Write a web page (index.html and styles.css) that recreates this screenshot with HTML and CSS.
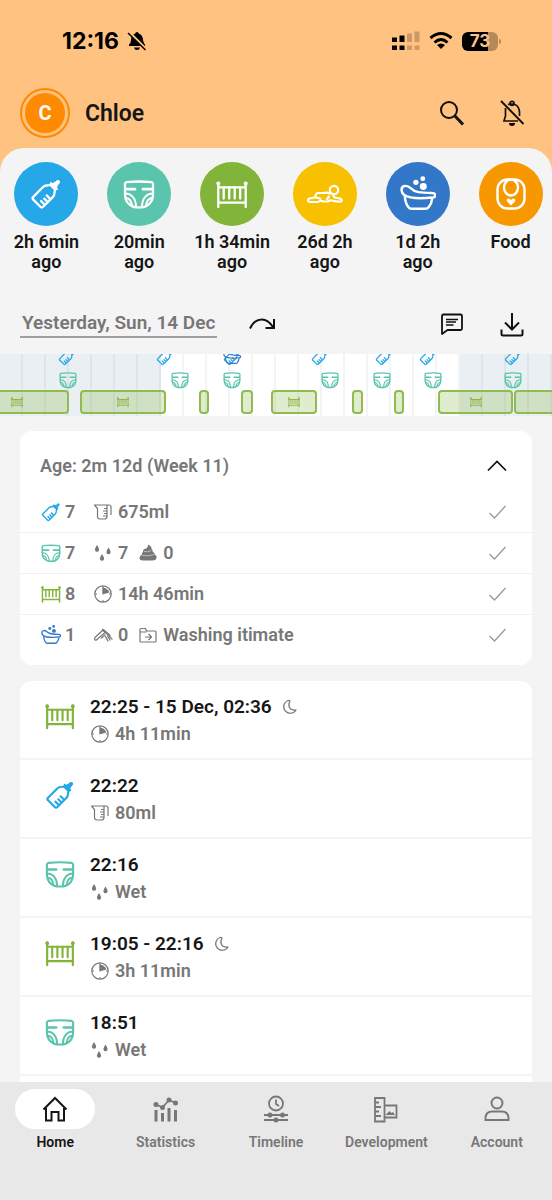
FILE: index.html
```html
<!DOCTYPE html>
<html lang="en">
<head>
<meta charset="utf-8">
<meta name="viewport" content="width=device-width, initial-scale=1">
<title>Chloe</title>
<link rel="stylesheet" href="styles.css">
</head>
<body>
<svg class="sprite" aria-hidden="true">
  <symbol id="bottle" viewBox="0 0 32 32">
    <g transform="rotate(45 16 16)" fill="none" stroke="currentColor" stroke-width="2.3" stroke-linejoin="round" stroke-linecap="round">
      <path d="M9 13.500Q9 11 10.500 9.500Q12 8 12.500 6.500H19.500Q20 8 21.500 9.500Q23 11 23 13.500V27Q23 29 21 29H11Q9 29 9 27Z"/>
      <path d="M22 24.500H17.500M22 20.500H18M22 16.500H17.500"/>
      <path fill="currentColor" stroke-width="1.500" d="M11.500 4.500H20.500L19.500 6.500H12.500ZM13.500 4Q14.800 2 14.800-1.500Q16-3 17.200-1.500Q17.200 2 18.500 4Z"/>
    </g>
  </symbol>
  <symbol id="diaper" viewBox="0 0 32 32">
    <g fill="none" stroke="currentColor" stroke-width="2.300" stroke-linecap="round" stroke-linejoin="round">
      <path d="M2 6Q2 4.500 3.500 4.200Q16 2.800 28.500 4.200Q30 4.500 30 6V16Q30 23 25.500 26.500Q22 29.300 19 29.300H13Q10 29.300 6.500 26.500Q2 23 2 16Z"/>
      <path d="M3 11.200H12M20 11.200H29" stroke-width="2.800"/>
      <path d="M2 15.500C9 15.500 13 21 13 29M30 15.500C23 15.500 19 21 19 29M3 20C6.500 20.500 8.500 23 9 27.500M29 20C25.500 20.500 23.500 23 23 27.500" stroke-width="2"/>
    </g>
  </symbol>
  <symbol id="crib" viewBox="0 0 32 32">
    <g fill="none" stroke="currentColor" stroke-width="2.300" stroke-linecap="round">
      <path d="M2.300 5V29M29.700 5V29M2.500 9.300H29.500M2.500 24.700H29.500"/>
      <path d="M7.700 9.500V20.500M13.200 9.500V20.500M18.700 9.500V20.500M24.200 9.500V20.500"/>
    </g>
    <circle cx="2.300" cy="5.500" r="2" fill="currentColor"/><circle cx="29.700" cy="5.500" r="2" fill="currentColor"/>
  </symbol>
  <symbol id="tummy" viewBox="0 0 36 32">
    <g fill="none" stroke="currentColor" stroke-width="2.200" stroke-linejoin="round" stroke-linecap="round">
      <circle cx="27" cy="12" r="4.200"/>
      <path d="M23 15.500Q20 14 17 15H11Q9 15 8.500 18L7.500 19.500L2.500 20.500Q.5 21.500 1 23Q1.500 24 4 24H11L14 22.500L16 23.500H21Q23 22 25 22.500Q30 24 34 23.500Q36 22 33 20.500L27.500 19.500L26 17M9 19.500L13 20.500M22 18.500L20 21"/>
    </g>
  </symbol>
  <symbol id="bath" viewBox="-1 -1 34 34">
    <g fill="none" stroke="currentColor" stroke-width="2.300" stroke-linejoin="round">
      <path d="M.5 12C.5 8 5.500 7 9 10.500C13 14.500 18 15 29 15C33.500 15 33 19 30 19.300C20 20.300 8 20.500 3 17C1 15.500.5 14 .5 12Z"/>
      <path d="M3.500 18Q4 25 7 28.500Q8 30 10 30H23Q25 30 26 28.500Q29 25 29.500 20"/>
    </g>
    <g fill="currentColor"><circle cx="14" cy="5" r="2.500"/><circle cx="20.500" cy="1.500" r="2.300"/><circle cx="21" cy="9" r="3.300"/></g>
  </symbol>
  <symbol id="bib" viewBox="0 0 32 34">
    <g fill="none" stroke="currentColor" stroke-width="2.400">
      <rect x="2.500" y="2.500" width="27" height="29" rx="10"/><ellipse cx="16" cy="10.500" rx="7" ry="8"/>
    </g>
    <path fill="currentColor" d="M16 28.500L12 24.500Q11 22 13.500 21.500Q15 21.500 16 23Q17 21.500 18.500 21.500Q21 22 20 24.500Z"/>
  </symbol>
  <symbol id="jug" viewBox="0 0 20 20">
    <g fill="none" stroke="currentColor" stroke-width="1.200" stroke-linejoin="round">
      <path d="M1.500 3H14V14.500Q14 17 11.500 17H7Q4.500 17 4.500 14.500V6.500Z"/><path d="M14 3H16Q18 3 18 5V13M11 6.500H14M10 9H14M11 11.500H14M10 14H14"/>
    </g>
  </symbol>
  <symbol id="drops" viewBox="0 0 20 20">
    <path fill="currentColor" d="M4 2Q6.500 6 6 7.200Q5.500 8.700 4 8.700T2 7.200Q1.500 6 4 2ZM15.500 4.500Q18 8.500 17.500 9.700Q17 11.200 15.500 11.200T13.500 9.700Q13 8.500 15.500 4.500ZM9 11Q11.500 15 11 16.200Q10.500 17.700 9 17.700T7 16.200Q6.500 15 9 11Z"/>
  </symbol>
  <symbol id="poop" viewBox="0 0 20 20">
    <path fill="currentColor" d="M10 1.500Q14 3.500 13.500 6Q15.500 7 14.500 9Q17 9.500 16.500 11.500Q19 12.500 18.500 15Q18 17.500 14 17.500H5Q1.500 17.500 1.500 15Q1.500 12.500 4 11.500Q3.500 9.500 5 9Q4.500 7 6.500 6Q10 5.500 10 1.500Z"/>
    <path fill="none" stroke="#fff" stroke-width=".5" d="M6 8.500Q10 9.500 13 7.500M4 12.500Q10 13.500 16 11.500"/>
  </symbol>
  <symbol id="clock" viewBox="0 0 20 20">
    <circle cx="10" cy="10" r="8.200" fill="none" stroke="currentColor" stroke-width="1.200"/>
    <path fill="currentColor" d="M9.300 10.500V3.500Q14 3.500 16.500 8.500Z"/>
    <path stroke="currentColor" stroke-width="1" d="M2 10H4M16 10H18M10 16V18M10 2V4"/>
  </symbol>
  <symbol id="brush" viewBox="0 0 20 20">
    <g fill="none" stroke="currentColor" stroke-width="1.200" stroke-linecap="round">
      <path d="M9.500 5.500L2 12.500Q1 14 2 15Q3 15.500 4 14.500L11.500 8"/>
      <path d="M10 4.800L16.500 10.500" stroke-width="2.200"/>
      <path d="M12 10L8.500 13M12.500 11.500L15 16M14.500 11L17 15M16.500 11.500L19 14" stroke-width="1.300"/>
    </g>
  </symbol>
  <symbol id="folder" viewBox="0 0 20 20">
    <g fill="none" stroke="currentColor" stroke-width="1.200" stroke-linejoin="round"><path d="M2 16V4.500Q2 3.500 3 3.500H7.500L8.500 6H17Q18 6 18 7V16Q18 17 17 17H3Q2 17 2 16ZM2 7H8.500"/><path d="M7 12H13M10.500 9L13.500 12L10.500 15"/></g>
  </symbol>
  <symbol id="moon" viewBox="0 0 16 16">
    <path fill="none" stroke="currentColor" stroke-width="1.200" stroke-linejoin="round" d="M6 1.500A6.600 6.600 0 1 0 14 11Q9 11.500 7.500 8.500Q6 5.500 8 2Q7 1.300 6 1.500Z"/>
  </symbol>
  <symbol id="check" viewBox="0 0 20 20"><path d="M2.500 11L7.500 16L18.500 4" fill="none" stroke="currentColor" stroke-width="1.300"/></symbol>
</svg>

<div class="app">
  <header class="top">
    <div class="status">
      <span class="time">12:16
        <svg class="i20" viewBox="0 0 20 20"><path d="M10 1Q11.500 1 11.700 2.500Q16 4 16 9Q16.500 12 18 13.500V15H2V13.500Q4 12 4 9Q4 4 8.300 2.500Q8.500 1 10 1Z M7 16.500H13Q12.500 19 10 19T7 16.500Z" fill="#000"/><path d="M2.500 1.500L19.500 18.500" stroke="#ffc280" stroke-width="2.500"/><path d="M1 2L18.500 19" stroke="#000" stroke-width="1.500"/></svg>
      </span>
      <span class="signals">
        <svg class="cell" viewBox="0 0 28 20"><path d="M0 6.500h5v4.500h-5zM7.500 4.500h5v6.500h-5zM0 14.500h5v4.500h-5zM7.500 14.500h5v4.500h-5z" fill="#000"/><path d="M15 2.500h5v8.500h-5zM22.500.5h5v10.500h-5zM15 14.500h5v4.500h-5zM22.500 14.500h5v4.500h-5z" fill="#c99a66"/></svg>
        <svg class="wifi" viewBox="0 0 24 20"><g fill="none" stroke="#000" stroke-width="3"><path d="M1.500 7Q12-2 22.500 7M5.500 11.500Q12 5.500 18.500 11.500"/></g><path d="M8 14Q12 11 16 14L12 18Z"/></svg>
        <span class="battery"><span class="level">73</span></span>
      </span>
    </div>
    <div class="appbar">
      <button class="avatar" aria-label="Profile of Chloe"><span class="initial">C</span></button>
      <h1 class="name">Chloe</h1>
      <button class="icon-btn" aria-label="Search"><svg class="i28" viewBox="0 0 28 28"><circle cx="11" cy="11" r="8" fill="none" stroke="#111" stroke-width="2"/><path d="M16.500 16.500L25 25.500" stroke="#111" stroke-width="3"/></svg></button>
      <button class="icon-btn" aria-label="Notifications off"><svg class="i28" viewBox="0 0 28 28"><g fill="none" stroke="#111" stroke-width="1.700"><path d="M10 5.500Q20.500 3 21.500 13V17M7.500 9V17L6 22H20"/><circle cx="14" cy="4.300" r="2"/><path d="M3 2L25.500 25" stroke-width="1.900"/></g><path d="M11 24H17Q17 27 14 27T11 24Z"/></svg></button>
    </div>
  </header>

  <main class="panel">
    <nav class="activities" aria-label="Activities">
      <button class="activity"><span class="disc blue"><svg class="i32"><use href="#bottle"/></svg></span>2h 6min<br>ago</button>
      <button class="activity"><span class="disc teal"><svg class="i32"><use href="#diaper"/></svg></span>20min<br>ago</button>
      <button class="activity"><span class="disc green"><svg class="i32"><use href="#crib"/></svg></span>1h 34min<br>ago</button>
      <button class="activity"><span class="disc yellow"><svg class="i36"><use href="#tummy"/></svg></span>26d 2h<br>ago</button>
      <button class="activity"><span class="disc navy"><svg class="i36"><use href="#bath"/></svg></span>1d 2h<br>ago</button>
      <button class="activity"><span class="disc orange"><svg class="i34"><use href="#bib"/></svg></span>Food</button>
    </nav>

    <div class="daybar">
      <button class="date">Yesterday, Sun, 14 Dec</button>
      <button class="icon-btn" aria-label="Next day"><svg class="i28" viewBox="0 0 28 28"><path d="M2 18.500Q6 9.500 14 9.500Q20 9.500 25 17M26 9V18H17.500" fill="none" stroke="#111" stroke-width="2"/></svg></button>
      <button class="icon-btn push" aria-label="Notes"><svg class="i28" viewBox="0 0 28 28"><g fill="none" stroke="#111" stroke-width="1.800" stroke-linejoin="round"><path d="M4 24V6Q4 4.500 5.500 4.500H22.500Q24 4.500 24 6V18.500Q24 20 22.500 20H9.500Z"/><path d="M8 9.500H20M8 12H18M8 15H15.500" stroke-width="1.500"/></g></svg></button>
      <button class="icon-btn" aria-label="Download"><svg class="i28" viewBox="0 0 28 28"><path d="M14 3V19M7 12.500L14 19.500L21 12.500M3.500 19.500V24Q3.500 25.500 5 25.500H23Q24.500 25.500 24.500 24V19.500" fill="none" stroke="#111" stroke-width="2"/></svg></button>
    </div>

    <div class="timeline">
      <span class="night" style="left:0%;width:29.200%"></span>
      <span class="night" style="left:83.300%;width:16.700%"></span>
      <div class="hours"><i></i><i></i><i></i><i></i><i></i><i></i><i></i><i></i><i></i><i></i><i></i><i></i><i></i><i></i><i></i><i></i><i></i><i></i><i></i><i></i><i></i><i></i><i></i><i></i></div>
      <svg class="mark feed" style="left:12.200%"><use href="#bottle"/></svg>
      <svg class="mark feed" style="left:29.900%"><use href="#bottle"/></svg>
      <svg class="mark feed" style="left:42%"><use href="#bottle"/></svg>
      <svg class="mark wash" style="left:42%"><use href="#bath"/></svg>
      <svg class="mark feed" style="left:58%"><use href="#bottle"/></svg>
      <svg class="mark feed" style="left:69.600%"><use href="#bottle"/></svg>
      <svg class="mark feed" style="left:77.500%"><use href="#bottle"/></svg>
      <svg class="mark feed" style="left:93%"><use href="#bottle"/></svg>
      <svg class="mark change" style="left:12.300%"><use href="#diaper"/></svg>
      <svg class="mark change" style="left:32.600%"><use href="#diaper"/></svg>
      <svg class="mark change" style="left:42%"><use href="#diaper"/></svg>
      <svg class="mark change" style="left:59.800%"><use href="#diaper"/></svg>
      <svg class="mark change" style="left:69.200%"><use href="#diaper"/></svg>
      <svg class="mark change" style="left:78.500%"><use href="#diaper"/></svg>
      <svg class="mark change" style="left:92.900%"><use href="#diaper"/></svg>
      <span class="sleep" style="left:-6.500%;width:19%"><svg class="i12"><use href="#crib"/></svg></span>
      <span class="sleep" style="left:14.500%;width:15.600%"><svg class="i12"><use href="#crib"/></svg></span>
      <span class="sleep" style="left:36%;width:1.900%"></span>
      <span class="sleep" style="left:43.700%;width:2.100%"></span>
      <span class="sleep" style="left:49.100%;width:8.300%"><svg class="i12"><use href="#crib"/></svg></span>
      <span class="sleep" style="left:63.800%;width:2%"></span>
      <span class="sleep" style="left:71.400%;width:1.800%"></span>
      <span class="sleep" style="left:79.400%;width:13.600%"><svg class="i12"><use href="#crib"/></svg></span>
      <span class="sleep" style="left:93.200%;width:20%"></span>
    </div>

    <section class="card summary">
      <button class="age">Age: 2m 12d (Week 11)<svg class="i20" viewBox="0 0 20 20"><path d="M1 14.500L10 5.500L19 14.500" fill="none" stroke="#111" stroke-width="1.700"/></svg></button>
      <ul class="rows">
        <li><span class="count"><svg class="i20 c-blue"><use href="#bottle"/></svg>7</span><svg class="i20"><use href="#jug"/></svg>675ml<svg class="i20 tick"><use href="#check"/></svg></li>
        <li><span class="count"><svg class="i20 c-teal"><use href="#diaper"/></svg>7</span><svg class="i20"><use href="#drops"/></svg>7 <svg class="i20 second"><use href="#poop"/></svg>0<svg class="i20 tick"><use href="#check"/></svg></li>
        <li><span class="count"><svg class="i20 c-green"><use href="#crib"/></svg>8</span><svg class="i20"><use href="#clock"/></svg>14h 46min<svg class="i20 tick"><use href="#check"/></svg></li>
        <li><span class="count"><svg class="i20 c-navy"><use href="#bath"/></svg>1</span><svg class="i20"><use href="#brush"/></svg>0 <svg class="i20 second"><use href="#folder"/></svg>Washing itimate<svg class="i20 tick"><use href="#check"/></svg></li>
      </ul>
    </section>

    <section class="card log">
      <a class="entry" href="#"><svg class="i30 c-green"><use href="#crib"/></svg><span class="what"><span class="when">22:25 - 15 Dec, 02:36<svg class="i16"><use href="#moon"/></svg></span><span class="detail"><svg class="i20"><use href="#clock"/></svg>4h 11min</span></span></a>
      <a class="entry" href="#"><svg class="i30 c-blue"><use href="#bottle"/></svg><span class="what"><span class="when">22:22</span><span class="detail"><svg class="i20"><use href="#jug"/></svg>80ml</span></span></a>
      <a class="entry" href="#"><svg class="i30 c-teal"><use href="#diaper"/></svg><span class="what"><span class="when">22:16</span><span class="detail"><svg class="i20"><use href="#drops"/></svg>Wet</span></span></a>
      <a class="entry" href="#"><svg class="i30 c-green"><use href="#crib"/></svg><span class="what"><span class="when">19:05 - 22:16<svg class="i16"><use href="#moon"/></svg></span><span class="detail"><svg class="i20"><use href="#clock"/></svg>3h 11min</span></span></a>
      <a class="entry" href="#"><svg class="i30 c-teal"><use href="#diaper"/></svg><span class="what"><span class="when">18:51</span><span class="detail"><svg class="i20"><use href="#drops"/></svg>Wet</span></span></a>
      <div class="more"></div>
    </section>
  </main>

  <nav class="tabs" aria-label="Main">
    <a class="tab current" href="#"><span class="pill"><svg class="i28" viewBox="0 0 28 28"><path d="M2.500 14.500L14 3L25.500 14.500M5 13V25.500H10.500V17H17.500V25.500H23V13" fill="none" stroke="currentColor" stroke-width="2"/></svg></span>Home</a>
    <a class="tab" href="#"><span class="pill"><svg class="i28" viewBox="0 0 28 28"><g fill="none" stroke="currentColor"><path d="M4 9.500L10.500 12.500L17 5L23.500 8" stroke-width="1.800"/><path d="M4 15V26.500M10.500 18V26.500M17 13V26.500M23.500 15V26.500" stroke-width="3"/></g><g fill="currentColor"><circle cx="4" cy="9.500" r="2.500"/><circle cx="10.500" cy="12.500" r="2.500"/><circle cx="17" cy="5" r="2.500"/><circle cx="23.500" cy="8" r="2.500"/></g></svg></span>Statistics</a>
    <a class="tab" href="#"><span class="pill"><svg class="i28" viewBox="0 0 28 28"><g fill="none" stroke="currentColor" stroke-width="1.800"><circle cx="14" cy="8.500" r="7"/><path d="M14 4.500V9L17 11M2 20H26M2 25H26"/></g><circle cx="8" cy="20" r="2.500" fill="currentColor"/><circle cx="20.500" cy="20" r="2.500" fill="currentColor"/><circle cx="14" cy="25" r="2.500" fill="currentColor"/></svg></span>Timeline</a>
    <a class="tab" href="#"><span class="pill"><svg class="i28" viewBox="0 0 28 28"><g fill="none" stroke="currentColor" stroke-width="1.800"><path d="M3 3H12.500V26.500H3ZM3 7.500H7M3 12H9M3 16.500H7M3 21H9M12.500 10.500H24.500V22.500H12.500"/></g><path fill="currentColor" d="M13.500 20L17.500 16L19.500 18L21 17L23 20Z"/></svg></span>Development</a>
    <a class="tab" href="#"><span class="pill"><svg class="i28" viewBox="0 0 28 28"><g fill="none" stroke="currentColor" stroke-width="1.900"><circle cx="14" cy="8" r="5.500"/><path d="M2.500 25V22Q3.500 16.500 9 16.500H19Q24.500 16.500 25.500 22V25Z"/></g></svg></span>Account</a>
  </nav>
</div>
</body>
</html>
```
FILE: styles.css
```css
* { box-sizing: border-box; }
body {
  margin: 0;
  background: #ffc280;
  color: #161616;
  font: 600 18px/20px Roboto, sans-serif;
}
button { border: 0; padding: 0; background: none; color: inherit; font: inherit; cursor: pointer; }
a { color: inherit; text-decoration: none; }
svg { display: block; flex: none; }
.sprite { position: absolute; width: 0; height: 0; }
.i12 { width: 12px; height: 12px; }
.i16 { width: 16px; height: 16px; }
.i20 { width: 20px; height: 20px; }
.i28 { width: 28px; height: 28px; }
.i30 { width: 30px; height: 30px; }
.i32 { width: 32px; height: 32px; }
.i34 { width: 34px; height: 34px; }
.i36 { width: 36px; height: 36px; }
.c-blue { color: #25a7e8; }
.c-teal { color: #5ac4ac; }
.c-green { color: #82b43a; }
.c-navy { color: #3277c8; }

.app { display: flex; flex-direction: column; height: 100vh; }

/* Header */
.status {
  display: flex;
  justify-content: space-between;
  align-items: center;
  height: 78px;
  padding: 4px 54px 0 62px;
}
.time { display: flex; align-items: center; gap: 8px; color: #000; font: 700 23px/24px Inter, sans-serif; }
.signals { display: flex; align-items: center; gap: 9px; }
.cell { width: 28px; height: 20px; }
.wifi { width: 24px; height: 20px; }
.battery {
  position: relative;
  width: 36px;
  height: 19px;
  border-radius: 6px;
  background: linear-gradient(90deg, #000 73%, #b58a5b 73%);
}
.battery::after {
  content: "";
  position: absolute;
  right: -3px;
  top: 7px;
  width: 2px;
  height: 5px;
  border-radius: 0 2px 2px 0;
  background: #b58a5b;
}
.level { display: block; color: #ffc280; font: 700 17px/19px Inter, sans-serif; text-align: center; }
.appbar { display: flex; align-items: center; height: 70px; padding: 0 26px 0 20px; }
.avatar { width: 50px; height: 50px; padding: 3px; border: 2px solid #ff8a00; border-radius: 50%; }
.initial { display: grid; place-items: center; width: 40px; height: 40px; border-radius: 50%; background: #ff8a00; color: #fff; font: 700 20px/24px Roboto, sans-serif; }
.name { flex: 1; margin: 0 0 0 15px; padding-top: 2px; font: 600 23px/28px Roboto, sans-serif; }
.icon-btn { flex: none; display: grid; place-items: center; width: 28px; height: 28px; }
.icon-btn + .icon-btn { margin-left: 32px; }

/* Content panel */
.panel {
  flex: 1;
  min-height: 0;
  overflow: hidden;
  padding-top: 14px;
  border-radius: 24px 24px 0 0;
  background: #f4f4f4;
}
.activities { display: grid; grid-template-columns: repeat(6, 1fr); margin-right: -5px; }
.activity { display: flex; flex-direction: column; align-items: center; white-space: nowrap; }
.disc { display: grid; place-items: center; width: 64px; height: 64px; margin-bottom: 6px; border-radius: 50%; color: #fff; }
.blue { background: #25a7e8; }
.teal { background: #5ac4ac; }
.green { background: #82b43a; }
.yellow { background: #f7c000; }
.navy { background: #3277c8; }
.orange { background: #f79800; }

.daybar { display: flex; align-items: center; height: 56px; margin-top: 26px; padding: 0 26px 4px 20px; }
.date { margin-right: 31px; padding: 2px 2px 3px; border-bottom: 2px solid #a0a0a0; color: #777; font-size: 19px; }
.daybar .push { margin-left: auto; }

.timeline { position: relative; height: 62px; overflow: hidden; background: #fff; }
.night { position: absolute; top: 0; bottom: 0; background: #e9eff3; }
.hours { position: absolute; inset: 0; display: grid; grid-template-columns: repeat(24, 1fr); }
.hours i { border-right: 2px solid rgba(0, 0, 0, .045); }
.mark { position: absolute; width: 18px; height: 18px; transform: translateX(-50%); }
.feed { top: -6px; color: #25a7e8; }
.wash { top: -7px; width: 20px; color: #3277c8; }
.change { top: 17px; color: #5ac4ac; }
.sleep {
  position: absolute;
  top: 36px;
  display: grid;
  place-items: center;
  height: 24px;
  border: 2px solid #8fbc50;
  border-radius: 4px;
  background: rgba(130, 180, 58, .25);
  color: #82b43a;
}

.card { margin: 15px 20px 0; border-radius: 12px; background: #fff; color: #777; }
.age { display: flex; align-items: center; justify-content: space-between; width: 100%; height: 60px; padding: 10px 25px 0 20px; }
.rows { margin: 0; padding: 0 0 10px; list-style: none; }
.rows li { display: flex; align-items: center; gap: 5px; height: 41px; padding: 0 25px 0 21px; }
.rows li + li { border-top: 1px solid #f0f0f0; }
.count { display: flex; align-items: center; gap: 4px; width: 47px; }
.second { margin-left: 5px; }
.tick { margin-left: auto; color: #999; }

.log { margin-top: 16px; border-radius: 12px 12px 0 0; }
.entry { display: flex; align-items: center; gap: 15px; height: 79px; padding: 0 25px; border-bottom: 2px solid #f5f5f5; }
.entry > svg { margin-bottom: 8px; }
.what { padding-top: 1px; }
.when, .detail { display: flex; align-items: center; height: 27px; }
.when { gap: 10px; color: #161616; font-size: 19px; }
.when svg { color: #777; }
.detail { gap: 5px; }
.more { height: 40px; }

/* Bottom navigation */
.tabs { display: grid; grid-template-columns: repeat(5, 1fr); height: 118px; padding-top: 7px; background: #e8e8e8; }
.tab { display: flex; flex-direction: column; align-items: center; gap: 3px; color: #777; font-size: 14px; }
.pill { display: grid; place-items: center; width: 80px; height: 40px; border-radius: 20px; }
.current { color: #161616; }
.current .pill { background: #fff; }
```
